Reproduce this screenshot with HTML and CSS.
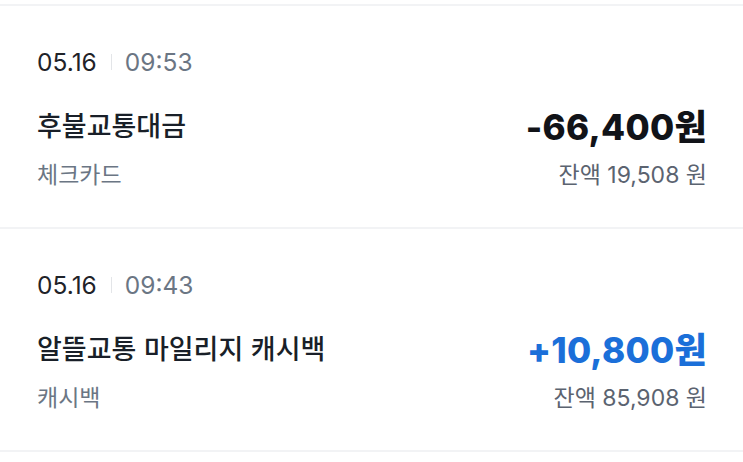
FILE: index.html
```html
<!DOCTYPE html>
<html lang="ko">
<head>
<meta charset="utf-8">
<link rel="stylesheet" href="styles.css">
</head>
<body>
<div class="list">
  <div class="sep"></div>
  <div class="item">
    <div class="when"><span class="date">05.16</span><span class="bar"></span><span class="time">09:53</span></div>
    <div class="row main">
      <span class="title">후불교통대금</span>
      <span class="amount">-66,400원</span>
    </div>
    <div class="row sub">
      <span class="kind">체크카드</span>
      <span class="balance">잔액 19,508 원</span>
    </div>
  </div>
  <div class="sep"></div>
  <div class="item">
    <div class="when"><span class="date">05.16</span><span class="bar"></span><span class="time">09:43</span></div>
    <div class="row main">
      <span class="title">알뜰교통 마일리지 캐시백</span>
      <span class="amount plus">+10,800원</span>
    </div>
    <div class="row sub">
      <span class="kind">캐시백</span>
      <span class="balance">잔액 85,908 원</span>
    </div>
  </div>
  <div class="sep"></div>
</div>
</body>
</html>
```

FILE: styles.css
```css
* { box-sizing: border-box; }
html, body { margin: 0; padding: 0; background: #ffffff; }
body {
  font-family: Inter, "Noto Sans CJK KR", sans-serif;
  color: #191f28;
  width: 743px;
  overflow: hidden;
}
.list { padding-top: 4px; }
.sep { height: 2px; background: #f2f3f5; }
.item {
  padding: 41px 36px 40px 37px;
  display: flex;
  flex-direction: column;
}
.when {
  display: flex;
  align-items: center;
  height: 30px;
  font-size: 24.5px;
}
.date { color: #1f2329; }
.bar {
  width: 1px;
  height: 16px;
  background: #e3e5e8;
  margin: 0 13px 0 14px;
}
.time { color: #6b7684; }
.row {
  display: flex;
  justify-content: space-between;
  align-items: center;
}
.main { height: 40px; margin-top: 27px; }
.sub { height: 28px; margin-top: 15px; }
.title {
  font-family: "Noto Sans CJK KR", sans-serif;
  font-size: 27px;
  font-weight: 500;
  color: #191f28;
}
.amount {
  font-size: 35px;
  font-weight: 800;
  color: #111318;
  letter-spacing: 0.3px;
}
.amount.plus { color: #1b6fd9; }
.kind {
  font-family: "Noto Sans CJK KR", sans-serif;
  font-size: 23px;
  color: #6b7684;
}
.balance {
  font-size: 23px;
  color: #5b6370;
}
```
